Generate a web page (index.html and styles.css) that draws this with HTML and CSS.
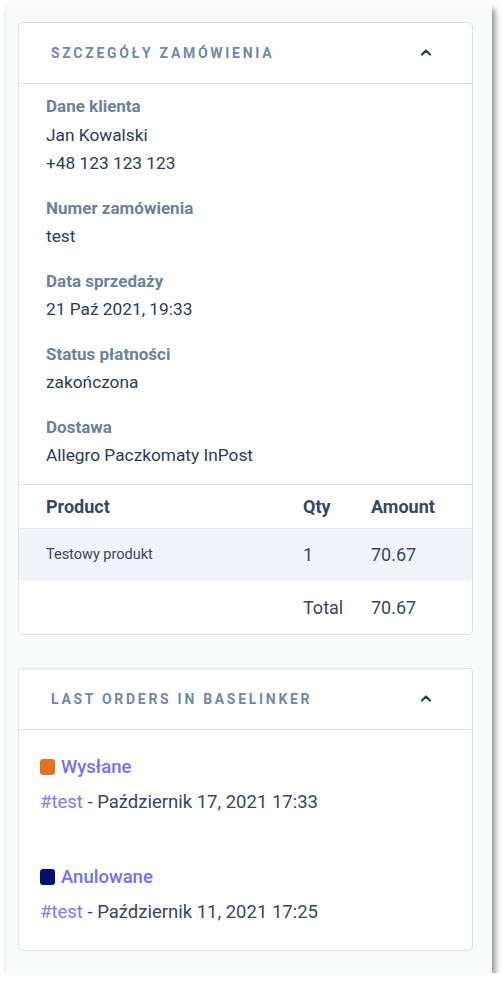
FILE: index.html
```html
<!DOCTYPE html>
<html lang="pl">
<head>
<meta charset="utf-8">
<title>Szczegóły zamówienia</title>
<link rel="stylesheet" href="styles.css">
</head>
<body>
<div class="frame">
  <section class="card">
    <header class="card-head">
      <h2 class="card-title">Szczegóły zamówienia</h2>
      <svg class="chev" width="12" height="8" viewBox="0 0 12 8"><path d="M2 6.5 L6 2.5 L10 6.5" fill="none" stroke="#2d3a55" stroke-width="2.2" stroke-linecap="round" stroke-linejoin="round"/></svg>
    </header>
    <div class="details">
      <div class="group">
        <div class="label">Dane klienta</div>
        <div class="value">Jan Kowalski</div>
        <div class="value">+48 123 123 123</div>
      </div>
      <div class="group">
        <div class="label">Numer zamówienia</div>
        <div class="value">test</div>
      </div>
      <div class="group">
        <div class="label">Data sprzedaży</div>
        <div class="value">21 Paź 2021, 19:33</div>
      </div>
      <div class="group">
        <div class="label">Status płatności</div>
        <div class="value">zakończona</div>
      </div>
      <div class="group">
        <div class="label">Dostawa</div>
        <div class="value">Allegro Paczkomaty InPost</div>
      </div>
    </div>
    <div class="table">
      <div class="row head">
        <div>Product</div><div>Qty</div><div>Amount</div>
      </div>
      <div class="row item">
        <div class="pname">Testowy produkt</div><div>1</div><div>70.67</div>
      </div>
      <div class="row total">
        <div></div><div>Total</div><div>70.67</div>
      </div>
    </div>
  </section>

  <section class="card">
    <header class="card-head">
      <h2 class="card-title">Last orders in Baselinker</h2>
      <svg class="chev" width="12" height="8" viewBox="0 0 12 8"><path d="M2 6.5 L6 2.5 L10 6.5" fill="none" stroke="#2d3a55" stroke-width="2.2" stroke-linecap="round" stroke-linejoin="round"/></svg>
    </header>
    <div class="orders">
      <div class="order">
        <div class="status"><span class="sq orange"></span><a class="status-link">Wysłane</a></div>
        <div class="odate"><a class="olink">#test</a> - Październik 17, 2021 17:33</div>
      </div>
      <div class="order">
        <div class="status"><span class="sq navy"></span><a class="status-link">Anulowane</a></div>
        <div class="odate"><a class="olink">#test</a> - Październik 11, 2021 17:25</div>
      </div>
    </div>
  </section>
</div>
</body>
</html>
```

FILE: styles.css
```css
* { box-sizing: border-box; }
html, body { margin: 0; padding: 0; background: #ffffff; }
body { font-family: Roboto, "Liberation Sans", sans-serif; color: #2e3a59; }

.frame {
  margin: 5px 0 0 6px;
  width: 486px;
  height: 968px;
  background: #f9fafa;
  padding: 17px 19px 0 12px;
  display: flex;
  flex-direction: column;
  gap: 33px;
  box-shadow: 3px 4px 6px rgba(0,0,0,0.45);
}

.card {
  background: #ffffff;
  border: 1px solid #dbe0ea;
  border-radius: 5px;
  overflow: hidden;
}

.card-head {
  height: 61px;
  border-bottom: 1px solid #dbe0ea;
  display: flex;
  align-items: center;
  justify-content: space-between;
  padding: 0 40px 0 32px;
}
.card-title {
  margin: 0;
  font-size: 14px;
  font-weight: 700;
  letter-spacing: 2.7px;
  text-transform: uppercase;
  color: #7487a4;
}
.chev { display: block; margin-top: -2px; }

.details { padding: 8px 27px 14px; }
.group { margin-bottom: 16px; }
.group:last-child { margin-bottom: 0; }
.label {
  font-size: 17px;
  font-weight: 700;
  color: #6e809c;
  line-height: 28.5px;
}
.value {
  font-size: 17.3px;
  color: #2e3a59;
  line-height: 28.5px;
}

.table { border-top: 1px solid #dbe0ea; }
.row {
  display: grid;
  grid-template-columns: 257px 68px 1fr;
  padding-left: 27px;
  align-items: center;
  font-size: 18px;
  color: #3a4562;
}
.row.head { height: 44px; font-weight: 700; color: #3a4562; border-bottom: 1px solid #e3e6ef; }
.row.item { height: 52px; background: #f2f3f8; border-radius: 0 0 4px 4px; }
.row.total { height: 53px; }
.pname { font-size: 14.5px; }

.orders { padding: 19px 21px 21px; }
.order { margin-bottom: 40px; }
.order:last-child { margin-bottom: 0; }
.status {
  display: flex;
  align-items: center;
  height: 36px;
  gap: 6px;
}
.sq { width: 15px; height: 16px; border-radius: 3px; display: inline-block; }
.sq.orange { background: #de7424; }
.sq.navy { background: #0a0a72; }
.status-link {
  font-size: 18.5px;
  font-weight: 500;
  color: #7070f8;
}
.odate {
  height: 34px;
  line-height: 34px;
  font-size: 18.5px;
  color: #3a4562;
}
.olink { color: #7b7bf6; }
```
